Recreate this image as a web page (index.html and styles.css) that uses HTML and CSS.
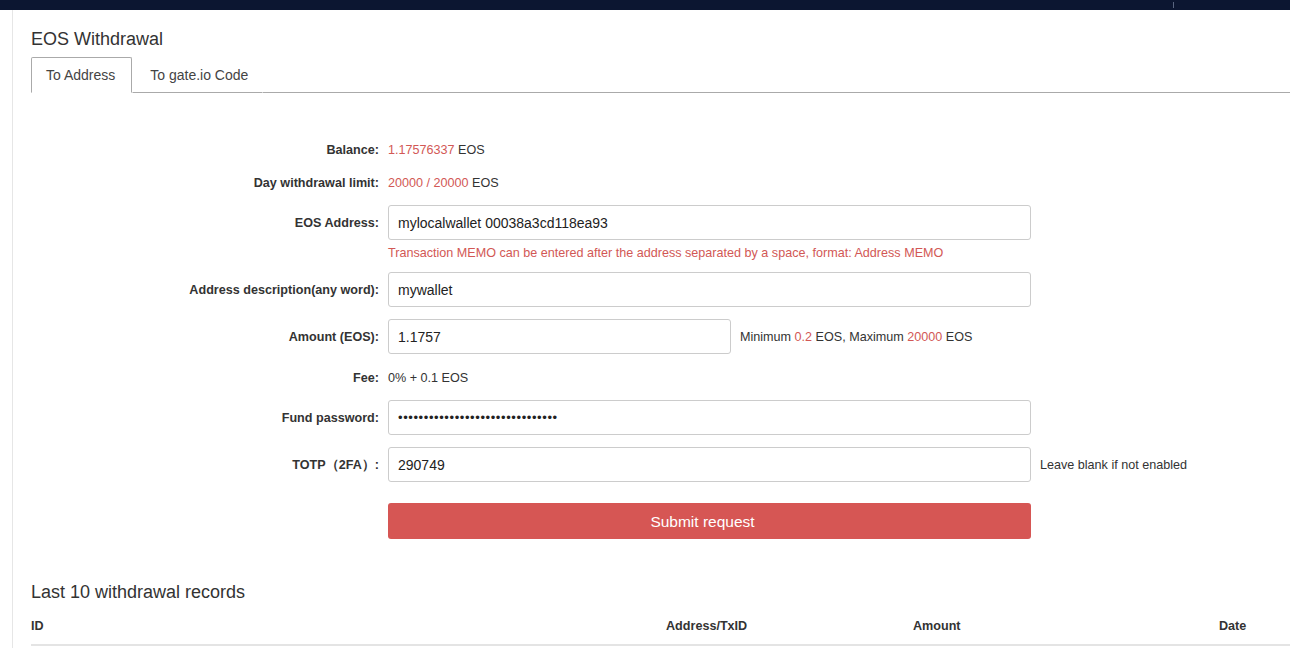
FILE: index.html
```html
<!DOCTYPE html>
<html>
<head>
<meta charset="utf-8">
<title>EOS Withdrawal</title>
<link rel="stylesheet" href="styles.css">
</head>
<body>
<header class="topbar"><span class="topbar-sep"></span></header>
<main class="page">
  <h2 class="title">EOS Withdrawal</h2>
  <nav class="tabs">
    <a class="tab active">To Address</a>
    <a class="tab">To gate.io Code</a>
    <span class="tabs-fill"></span>
  </nav>

  <form class="form">
    <div class="row text-row">
      <label class="label">Balance:</label>
      <div class="value"><span class="red">1.17576337</span> EOS</div>
    </div>
    <div class="row text-row">
      <label class="label">Day withdrawal limit:</label>
      <div class="value"><span class="red">20000 / 20000</span> EOS</div>
    </div>
    <div class="row row-address">
      <label class="label">EOS Address:</label>
      <input class="input wide" type="text" value="mylocalwallet 00038a3cd118ea93">
    </div>
    <div class="help red">Transaction MEMO can be entered after the address separated by a space, format: Address MEMO</div>
    <div class="row row-desc">
      <label class="label">Address description(any word):</label>
      <input class="input wide" type="text" value="mywallet">
    </div>
    <div class="row row-amount">
      <label class="label">Amount (EOS):</label>
      <input class="input narrow" type="text" value="1.1757">
      <span class="hint">Minimum <span class="red">0.2</span> EOS, Maximum <span class="red">20000</span> EOS</span>
    </div>
    <div class="row text-row row-fee">
      <label class="label">Fee:</label>
      <div class="value">0% + 0.1 EOS</div>
    </div>
    <div class="row row-pw">
      <label class="label">Fund password:</label>
      <input class="input wide pw" type="password" value="passwordpasswordpasswordpasswor">
    </div>
    <div class="row row-totp">
      <label class="label">TOTP（2FA）:</label>
      <input class="input wide" type="text" value="290749">
      <span class="hint hint-totp">Leave blank if not enabled</span>
    </div>
    <div class="row">
      <span class="label"></span>
      <button class="submit" type="button">Submit request</button>
    </div>
  </form>

  <h2 class="title records-title">Last 10 withdrawal records</h2>
  <div class="table-head">
    <div class="th th-id">ID</div>
    <div class="th th-addr">Address/TxID</div>
    <div class="th th-amount">Amount</div>
    <div class="th th-date">Date</div>
  </div>
</main>
</body>
</html>
```

FILE: styles.css
```css
html, body {
  margin: 0;
  padding: 0;
  background: #ffffff;
  overflow: hidden;
}

body {
  font-family: "Liberation Sans", Arial, sans-serif;
  color: #333333;
  width: 1290px;
  height: 648px;
}

.topbar {
  height: 10px;
  background: #0c1631;
  display: flex;
  justify-content: flex-end;
}

.topbar-sep {
  width: 1px;
  height: 6px;
  margin-top: 2px;
  margin-right: 116px;
  background: #5a6580;
}

.page {
  margin-left: 12px;
  border-left: 1px solid #e6e6e6;
  padding-left: 18px;
  padding-top: 19px;
  height: 640px;
  box-sizing: border-box;
}

.title {
  margin: 0;
  font-size: 18px;
  font-weight: normal;
  line-height: 20px;
  color: #333333;
}

.tabs {
  display: flex;
  margin-top: 8px;
}

.tab {
  display: block;
  padding: 7px 14px;
  font-size: 14px;
  line-height: 20px;
  color: #444444;
  border: 1px solid transparent;
  border-bottom: 1px solid #aaaaaa;
  white-space: nowrap;
}

.tab.active {
  border-color: #aaaaaa;
  border-bottom-color: transparent;
  border-radius: 2px 2px 0 0;
  padding-right: 16px;
}

.tab:nth-child(2) {
  padding-left: 17px;
}

.tabs-fill {
  flex: 1;
  border-bottom: 1px solid #aaaaaa;
}

.form {
  margin-top: 46px;
}

.row {
  display: flex;
  align-items: center;
}

.label {
  width: 348px;
  flex: none;
  margin-right: 9px;
  text-align: right;
  font-weight: bold;
  font-size: 12.6px;
  line-height: 20px;
  color: #333333;
  white-space: nowrap;
}

.text-row {
  height: 20px;
  margin-bottom: 12px;
  padding-top: 1px;
}

.value {
  font-size: 12.6px;
  line-height: 20px;
  color: #333333;
}

.red {
  color: #d25855;
}

.input {
  height: 35px;
  box-sizing: border-box;
  border: 1px solid #cccccc;
  border-radius: 3px;
  padding: 0 9px;
  font-family: "Liberation Sans", Arial, sans-serif;
  font-size: 14px;
  color: #222222;
  background: #ffffff;
  outline: none;
}

.input.wide {
  width: 643px;
}

.input.narrow {
  width: 343px;
}

.input.pw {
  font-size: 13px;
  letter-spacing: 0.6px;
}

.help {
  margin-left: 357px;
  margin-top: 2px;
  margin-bottom: 10px;
  padding-top: 1px;
  height: 19px;
  font-size: 12.6px;
  line-height: 20px;
}

.row-desc {
  margin-bottom: 12px;
}

.row-amount {
  margin-bottom: 13px;
}

.row-fee {
  margin-bottom: 12px;
}

.row-pw {
  margin-bottom: 12px;
}

.row-totp {
  margin-bottom: 21px;
}

.hint {
  margin-left: 9px;
  font-size: 12.6px;
  line-height: 20px;
  color: #333333;
}

.hint-totp {
  margin-left: 9px;
}

.submit {
  width: 643px;
  height: 36px;
  border: none;
  border-radius: 3px;
  background: #d65654;
  color: #ffffff;
  font-family: "Liberation Sans", Arial, sans-serif;
  font-size: 15.5px;
  padding: 2px 14px 0 0;
  cursor: pointer;
}

.records-title {
  margin-top: 43px;
}

.table-head {
  display: flex;
  margin-top: 14px;
  padding-bottom: 8px;
  border-bottom: 2px solid #e4e4e4;
  margin-right: -20px;
}

.th {
  font-size: 12.6px;
  font-weight: bold;
  line-height: 20px;
  color: #333333;
  flex: none;
}

.th-id {
  width: 635px;
}

.th-addr {
  width: 247px;
}

.th-amount {
  width: 306px;
}

.th-date {
  flex: 1;
}
```
